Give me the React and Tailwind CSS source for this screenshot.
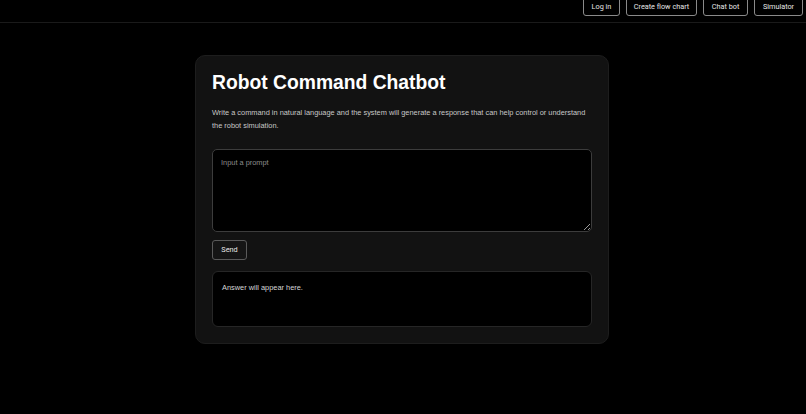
const NavButton = ({ label, width }) => (
  <button
    className={`-mt-[6px] h-[22px] ${width} rounded-[3px] border border-[#8a8a8a] bg-black text-[7.3px] text-[#e6e6e6] pt-[5px]`}
    style={{ fontFamily: 'Roboto, "Noto Sans", sans-serif' }}
  >
    {label}
  </button>
)

export default function App() {
  return (
    <div
      className="min-h-[414px] bg-black text-white"
      style={{ fontFamily: '"Liberation Sans", Arial, sans-serif' }}
    >
      <nav className="flex h-[23px] justify-end gap-[6px] overflow-hidden border-b border-[#1a1a1a] pr-[3px]">
        <NavButton label="Log in" width="w-[37px]" />
        <NavButton label="Create flow chart" width="w-[71px]" />
        <NavButton label="Chat bot" width="w-[45px]" />
        <NavButton label="Simulator" width="w-[49px]" />
      </nav>

      <main className="flex justify-center pt-[32px] pr-[2px]">
        <section className="w-[414px] rounded-[10px] border border-[#1d1d1d] bg-[#121212] px-[16px] pt-[16px] pb-[16px]">
          <h1 className="text-[19.3px] font-bold leading-[22px] text-white">Robot Command Chatbot</h1>
          <p className="mt-[13px] text-[7.4px] leading-[12.6px] text-[#c8c8c8]">
            Write a command in natural language and the system will generate a response that can help control or
            understand the robot simulation.
          </p>

          <textarea
            placeholder="Input a prompt"
            className="mt-[17px] block h-[83px] w-full resize rounded-[5px] border border-[#3c3c3c] bg-black px-[8px] py-[7px] text-[7.4px] text-white placeholder:text-[#8c8c8c] outline-none"
            style={{ fontFamily: '"Liberation Sans", Arial, sans-serif' }}
          />

          <button
            className="mt-[8px] h-[20px] w-[35px] rounded-[3px] border-[1.5px] border-[#5a5a5a] bg-[#151515] text-[7.3px] text-[#e6e6e6]"
            style={{ fontFamily: 'Roboto, "Noto Sans", sans-serif' }}
          >
            Send
          </button>

          <div className="mt-[11px] h-[56px] rounded-[6px] border border-[#262626] bg-black px-[9px] pt-[10px] text-[7.4px] leading-[12px] text-[#d6d6d6]">
            Answer will appear here.
          </div>
        </section>
      </main>
    </div>
  )
}
